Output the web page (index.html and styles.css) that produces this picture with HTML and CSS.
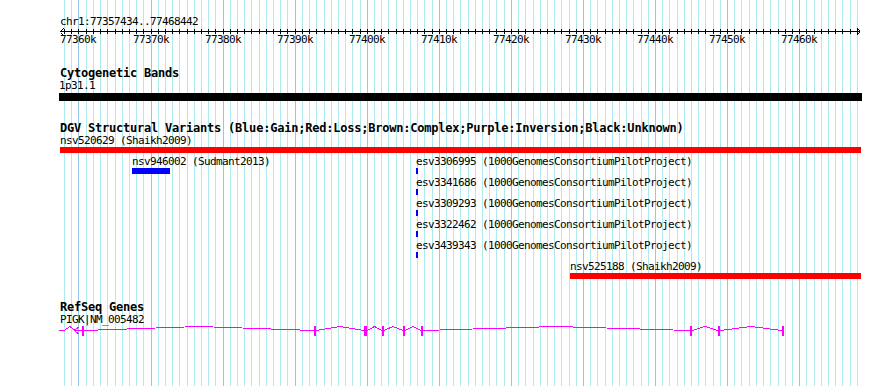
FILE: index.html
```html
<html>
    <head>
        <title>chr1:77357434..77468442</title>
        <link rel="stylesheet" href="styles.css">
    </head>
    <body>
        <div class="browser">
            <svg class="grid" width="890" height="386" shape-rendering="crispEdges">
                <path class="grid-minor" d="M64.5 0v386M71.5 0v386M86.5 0v386M93.5 0v386M100.5 0v386M107.5 0v386M115.5 0v386M122.5 0v386M129.5 0v386M136.5 0v386M143.5 0v386M158.5 0v386M165.5 0v386M172.5 0v386M179.5 0v386M187.5 0v386M194.5 0v386M201.5 0v386M208.5 0v386M215.5 0v386M230.5 0v386M237.5 0v386M244.5 0v386M251.5 0v386M259.5 0v386M266.5 0v386M273.5 0v386M280.5 0v386M287.5 0v386M302.5 0v386M309.5 0v386M316.5 0v386M324.5 0v386M331.5 0v386M338.5 0v386M345.5 0v386M352.5 0v386M360.5 0v386M374.5 0v386M381.5 0v386M388.5 0v386M396.5 0v386M403.5 0v386M410.5 0v386M417.5 0v386M424.5 0v386M432.5 0v386M446.5 0v386M453.5 0v386M460.5 0v386M468.5 0v386M475.5 0v386M482.5 0v386M489.5 0v386M496.5 0v386M504.5 0v386M518.5 0v386M525.5 0v386M533.5 0v386M540.5 0v386M547.5 0v386M554.5 0v386M561.5 0v386M569.5 0v386M576.5 0v386M590.5 0v386M597.5 0v386M605.5 0v386M612.5 0v386M619.5 0v386M626.5 0v386M633.5 0v386M641.5 0v386M648.5 0v386M662.5 0v386M669.5 0v386M677.5 0v386M684.5 0v386M691.5 0v386M698.5 0v386M705.5 0v386M713.5 0v386M720.5 0v386M734.5 0v386M741.5 0v386M749.5 0v386M756.5 0v386M763.5 0v386M770.5 0v386M778.5 0v386M785.5 0v386M792.5 0v386M806.5 0v386M814.5 0v386M821.5 0v386M828.5 0v386M835.5 0v386M842.5 0v386M850.5 0v386M857.5 0v386"/>
                <path class="grid-major" d="M78.5 0v386M151.5 0v386M223.5 0v386M295.5 0v386M367.5 0v386M439.5 0v386M511.5 0v386M583.5 0v386M655.5 0v386M727.5 0v386M799.5 0v386"/>
            </svg>

            <div class="ruler">
                <div class="locus">chr1:77357434..77468442</div>
                <svg class="axis" width="890" height="7" shape-rendering="crispEdges">
                    <path d="M60 3.5H860M63.5 0V1M62.5 1V2M61.5 2V3M61.5 5V6M62.5 6V7M63.5 7V7M857.5 0V1M858.5 1V2M859.5 2V3M859.5 4V5M858.5 5V6M857.5 6V7"/>
                    <path d="M64.5 1v5M71.5 1v5M78.5 1v5M86.5 1v5M93.5 1v5M100.5 1v5M107.5 1v5M115.5 1v5M122.5 1v5M129.5 1v5M136.5 1v5M143.5 1v5M151.5 1v5M158.5 1v5M165.5 1v5M172.5 1v5M179.5 1v5M187.5 1v5M194.5 1v5M201.5 1v5M208.5 1v5M215.5 1v5M223.5 1v5M230.5 1v5M237.5 1v5M244.5 1v5M251.5 1v5M259.5 1v5M266.5 1v5M273.5 1v5M280.5 1v5M287.5 1v5M295.5 1v5M302.5 1v5M309.5 1v5M316.5 1v5M324.5 1v5M331.5 1v5M338.5 1v5M345.5 1v5M352.5 1v5M360.5 1v5M367.5 1v5M374.5 1v5M381.5 1v5M388.5 1v5M396.5 1v5M403.5 1v5M410.5 1v5M417.5 1v5M424.5 1v5M432.5 1v5M439.5 1v5M446.5 1v5M453.5 1v5M460.5 1v5M468.5 1v5M475.5 1v5M482.5 1v5M489.5 1v5M496.5 1v5M504.5 1v5M511.5 1v5M518.5 1v5M525.5 1v5M533.5 1v5M540.5 1v5M547.5 1v5M554.5 1v5M561.5 1v5M569.5 1v5M576.5 1v5M583.5 1v5M590.5 1v5M597.5 1v5M605.5 1v5M612.5 1v5M619.5 1v5M626.5 1v5M633.5 1v5M641.5 1v5M648.5 1v5M655.5 1v5M662.5 1v5M669.5 1v5M677.5 1v5M684.5 1v5M691.5 1v5M698.5 1v5M705.5 1v5M713.5 1v5M720.5 1v5M727.5 1v5M734.5 1v5M741.5 1v5M749.5 1v5M756.5 1v5M763.5 1v5M770.5 1v5M778.5 1v5M785.5 1v5M792.5 1v5M799.5 1v5M806.5 1v5M814.5 1v5M821.5 1v5M828.5 1v5M835.5 1v5M842.5 1v5M850.5 1v5M857.5 1v5"/>
                </svg>
                <div class="scale">
                    <span style="left: 60px">77360k</span>
                    <span style="left: 133px">77370k</span>
                    <span style="left: 205px">77380k</span>
                    <span style="left: 277px">77390k</span>
                    <span style="left: 349px">77400k</span>
                    <span style="left: 421px">77410k</span>
                    <span style="left: 493px">77420k</span>
                    <span style="left: 565px">77430k</span>
                    <span style="left: 637px">77440k</span>
                    <span style="left: 709px">77450k</span>
                    <span style="left: 781px">77460k</span>
                </div>
            </div>

            <div class="track cyto">
                <h2 class="track-title">Cytogenetic Bands</h2>
                <div class="lane band-lane">
                    <div class="feature" style="left: 59px; width: 803px">
                        <div class="label band-label">1p31.1</div>
                        <div class="bar band"></div>
                    </div>
                </div>
            </div>

            <div class="track dgv">
                <h2 class="track-title">DGV Structural Variants (Blue:Gain;Red:Loss;Brown:Complex;Purple:Inversion;Black:Unknown)</h2>
                <div class="lane sv-row">
                    <div class="feature" style="left: 60px; width: 801px">
                        <div class="label">nsv520629 (Shaikh2009)</div>
                        <div class="bar loss"></div>
                    </div>
                </div>
                <div class="lane sv-row">
                    <div class="feature" style="left: 132px; width: 38px">
                        <div class="label">nsv946002 (Sudmant2013)</div>
                        <div class="bar gain"></div>
                    </div>
                    <div class="feature" style="left: 416px; width: 2px">
                        <div class="label">esv3306995 (1000GenomesConsortiumPilotProject)</div>
                        <div class="bar gain"></div>
                    </div>
                </div>
                <div class="lane sv-row">
                    <div class="feature" style="left: 416px; width: 2px">
                        <div class="label">esv3341686 (1000GenomesConsortiumPilotProject)</div>
                        <div class="bar gain"></div>
                    </div>
                </div>
                <div class="lane sv-row">
                    <div class="feature" style="left: 416px; width: 2px">
                        <div class="label">esv3309293 (1000GenomesConsortiumPilotProject)</div>
                        <div class="bar gain"></div>
                    </div>
                </div>
                <div class="lane sv-row">
                    <div class="feature" style="left: 416px; width: 2px">
                        <div class="label">esv3322462 (1000GenomesConsortiumPilotProject)</div>
                        <div class="bar gain"></div>
                    </div>
                </div>
                <div class="lane sv-row">
                    <div class="feature" style="left: 416px; width: 2px">
                        <div class="label">esv3439343 (1000GenomesConsortiumPilotProject)</div>
                        <div class="bar gain"></div>
                    </div>
                </div>
                <div class="lane sv-row">
                    <div class="feature" style="left: 570px; width: 291px">
                        <div class="label">nsv525188 (Shaikh2009)</div>
                        <div class="bar loss"></div>
                    </div>
                </div>
            </div>

            <div class="track refseq">
                <h2 class="track-title">RefSeq Genes</h2>
                <div class="gene-label">PIGK|NM_005482</div>
                <svg class="gene" width="890" height="10" shape-rendering="crispEdges">
                    <path class="intron" d="M59 4.5H64L70 0.5L75 4.5H82M84 4.5L199 0.5L314 4.5M316 4.5L340 0.5L364 4.5M367 4.5L374.5 0.5L382 4.5M384 4.5L393 0.5L403 4.5M405 4.5L413 0.5L421 4.5M423 4.5L556 0.5L690 4.5M692 4.5L705 0.5L718 4.5M720 4.5L751 0.5L782 4.5"/>
                    <path class="intron" d="M78.5 1L74.5 4.5L78.5 8"/>
                    <rect class="exon" x="82" y="0" width="2" height="10"/>
                    <rect class="exon" x="314" y="0" width="2" height="10"/>
                    <rect class="exon" x="364" y="0" width="3" height="10"/>
                    <rect class="exon" x="382" y="0" width="2" height="10"/>
                    <rect class="exon" x="403" y="0" width="2" height="10"/>
                    <rect class="exon" x="421" y="0" width="2" height="10"/>
                    <rect class="exon" x="690" y="0" width="2" height="10"/>
                    <rect class="exon" x="718" y="0" width="2" height="10"/>
                    <rect class="exon" x="782" y="0" width="2" height="10"/>
                </svg>
            </div>
        </div>
    </body>
</html>
```

FILE: styles.css
```css
/**/

body {
    margin: 0;
    background: #ffffff;
}

.browser {
    position: relative;
    z-index: 0;
    width: 890px;
    height: 386px;
    overflow: hidden;
    background: #ffffff;
    color: #000000;
    font-family: "DejaVu Sans Mono", "Liberation Mono", monospace;
    font-size: 11px;
    letter-spacing: -0.62px;
}

.grid {
    position: absolute;
    top: 0;
    left: 0;
    z-index: -1;
}

.grid-minor {
    stroke: #aeeaee;
    stroke-width: 1;
}

.grid-major {
    stroke: #98c6e8;
    stroke-width: 1;
}

/* ruler */

.ruler {
    padding-top: 15px;
}

.locus {
    padding-left: 60px;
    height: 13px;
    line-height: 13px;
}

.axis {
    display: block;
}

.axis path {
    stroke: #000000;
    stroke-width: 1;
    fill: none;
}

.scale {
    position: relative;
    height: 9px;
    line-height: 9px;
}

.scale span {
    position: absolute;
    top: 0;
    white-space: nowrap;
}

/* tracks */

.track-title {
    margin: 0;
    padding-left: 60px;
    height: 12px;
    font-size: 12px;
    font-weight: bold;
    line-height: 12px;
    letter-spacing: -0.22px;
    white-space: nowrap;
}

.cyto {
    margin-top: 23px;
}

.dgv {
    margin-top: 21px;
}

.refseq {
    margin-top: 20px;
}

.lane {
    position: relative;
}

.band-lane {
    height: 22px;
}

.sv-row {
    height: 21px;
}

.feature {
    position: absolute;
    top: 0;
}

.label {
    height: 13px;
    line-height: 13px;
    white-space: nowrap;
}

.band-label {
    height: 14px;
    line-height: 14px;
}

.bar {
    height: 6px;
}

.band {
    height: 8px;
    background: #000000;
}

.loss {
    background: #ff0000;
}

.gain {
    background: #0000ff;
}

.gene-label {
    padding-left: 60px;
    height: 13px;
    line-height: 13px;
}

.gene {
    display: block;
}

.intron {
    stroke: #ff00ff;
    stroke-width: 1;
    fill: none;
}

.exon {
    fill: #ff00ff;
}
/**/
```
